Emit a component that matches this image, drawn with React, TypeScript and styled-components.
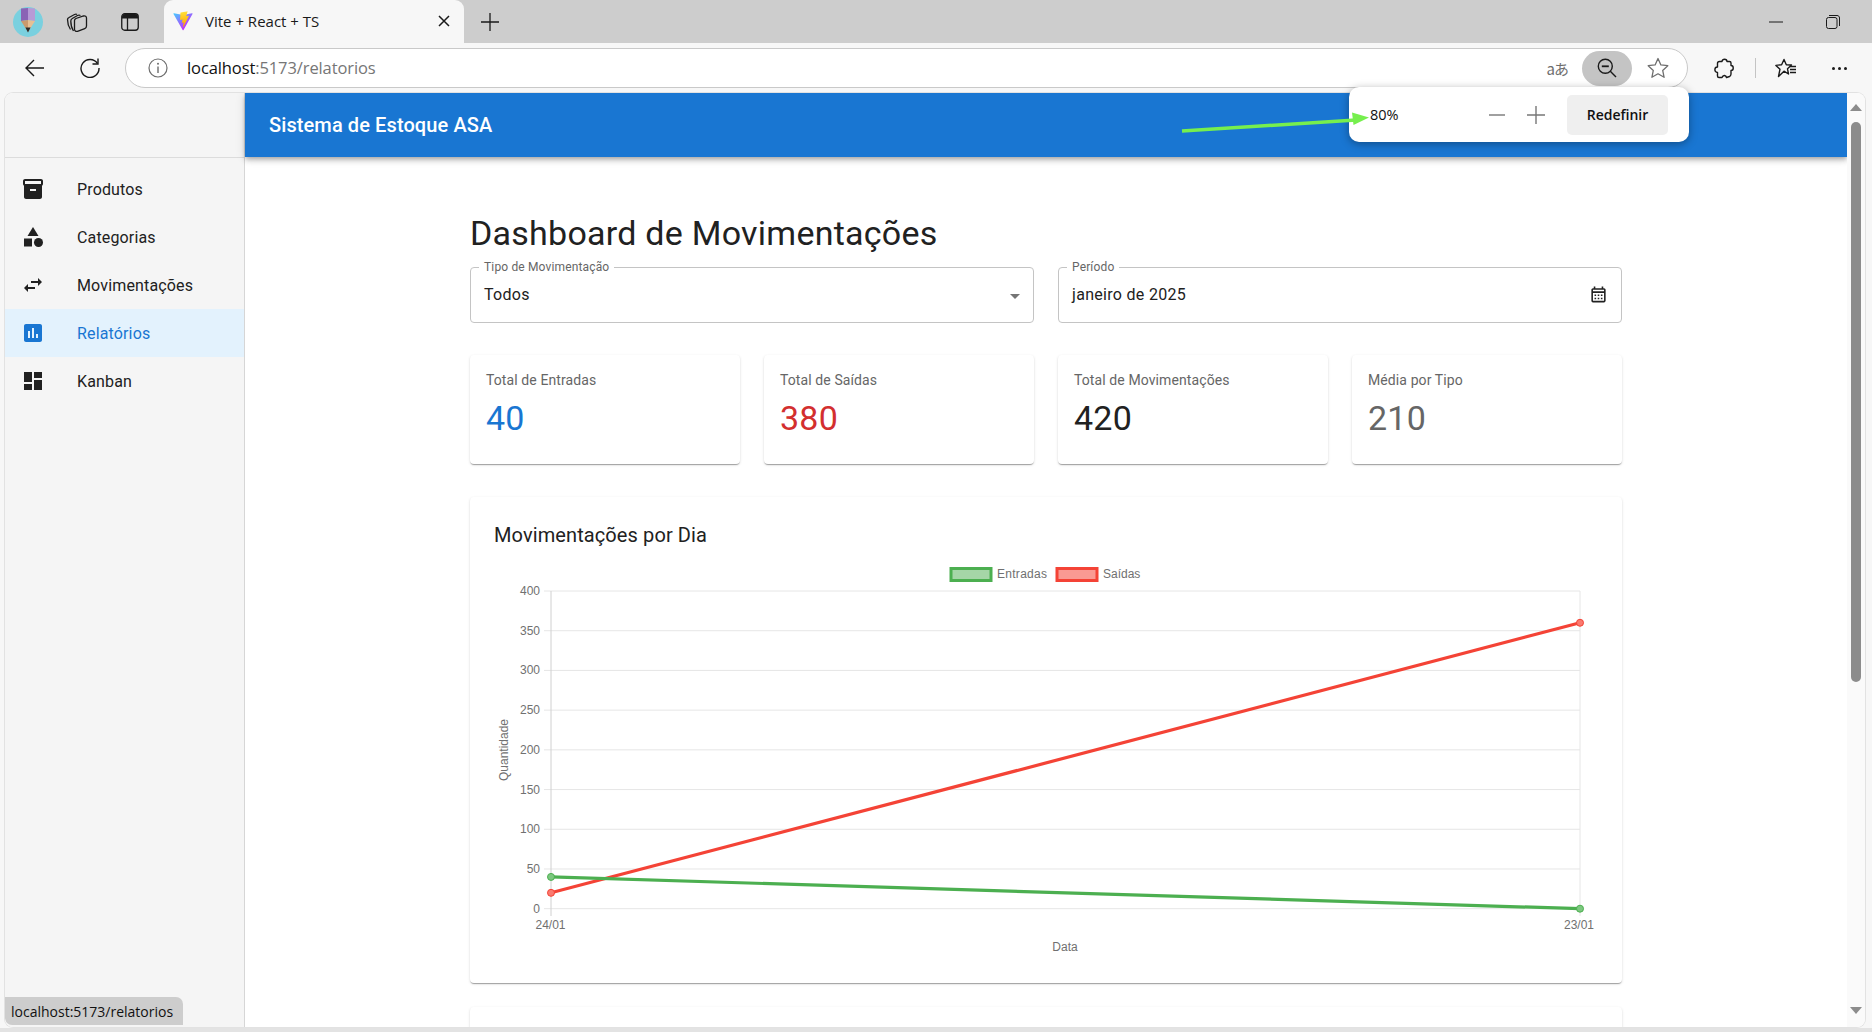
import React from 'react'
import styled, { createGlobalStyle } from 'styled-components'
import {
  MdInventory2,
  MdCategory,
  MdSwapHoriz,
  MdAssessment,
  MdDashboard,
  MdArrowDropDown,
  MdOutlineCalendarMonth,
} from 'react-icons/md'

const GlobalStyle = createGlobalStyle`
  html, body {
    margin: 0;
    padding: 0;
    height: 100%;
    overflow: hidden;
    background: #f7f7f7;
    font-family: Roboto, "Liberation Sans", sans-serif;
  }
  * { box-sizing: border-box; }
`

const chromeFont = `"Open Sans", "Noto Sans", "Liberation Sans", sans-serif`

const menu = [
  { label: 'Produtos', icon: <MdInventory2 size={24} /> },
  { label: 'Categorias', icon: <MdCategory size={24} /> },
  { label: 'Movimentações', icon: <MdSwapHoriz size={24} /> },
  { label: 'Relatórios', icon: <MdAssessment size={24} />, active: true },
  { label: 'Kanban', icon: <MdDashboard size={24} /> },
]

const stats = [
  { label: 'Total de Entradas', value: '40', color: '#1976d2' },
  { label: 'Total de Saídas', value: '380', color: '#d32f2f' },
  { label: 'Total de Movimentações', value: '420', color: '#212121' },
  { label: 'Média por Tipo', value: '210', color: '#666666' },
]

const ticks = [400, 350, 300, 250, 200, 150, 100, 50, 0]
const plot = { left: 551, right: 1580, top: 590, bottom: 907.7 }
const yOf = (v: number) => plot.bottom - (v / 400) * (plot.bottom - plot.top)

const ViteLogo = () => (
  <svg width="20" height="20" viewBox="0 0 410 404">
    <defs>
      <linearGradient id="va" x1="6" y1="33" x2="235" y2="344" gradientUnits="userSpaceOnUse">
        <stop stopColor="#41D1FF" />
        <stop offset="1" stopColor="#BD34FE" />
      </linearGradient>
      <linearGradient id="vb" x1="194" y1="8" x2="236" y2="292" gradientUnits="userSpaceOnUse">
        <stop stopColor="#FFEA83" />
        <stop offset="0.08" stopColor="#FFDD35" />
        <stop offset="1" stopColor="#FFA800" />
      </linearGradient>
    </defs>
    <path
      d="M399.641 59.5246L215.643 388.545C211.844 395.338 202.084 395.378 198.228 388.618L10.5817 59.5563C6.38087 52.1896 12.6802 43.2665 21.0281 44.7586L205.223 77.6824C206.398 77.8924 207.601 77.8904 208.776 77.6763L389.119 44.8058C397.439 43.2894 403.768 52.1434 399.641 59.5246Z"
      fill="url(#va)"
    />
    <path
      d="M292.965 1.5744L156.801 28.2552C154.563 28.6937 152.906 30.5903 152.771 32.8664L144.395 174.33C144.198 177.662 147.258 180.248 150.51 179.498L188.42 170.749C191.967 169.931 195.172 173.055 194.443 176.622L183.18 231.775C182.422 235.487 185.907 238.661 189.532 237.56L212.947 230.446C216.577 229.344 220.065 232.527 219.297 236.242L201.398 322.875C200.278 328.294 207.486 331.249 210.492 326.603L212.5 323.5L323.454 102.072C325.312 98.3645 322.108 94.137 318.036 94.9228L279.014 102.454C275.347 103.161 272.227 99.746 273.262 96.1583L298.731 7.86689C299.767 4.27314 296.636 0.855181 292.965 1.5744Z"
      fill="url(#vb)"
    />
  </svg>
)

const Avatar = () => (
  <svg width="30" height="30" viewBox="0 0 30 30">
    <circle cx="15" cy="15" r="15" fill="#7ad0df" />
    <path d="M8 1.5 L15 1 L15 13 L8 14 Z" fill="#8a63b5" />
    <path d="M15 1 L22 1.5 L22 14 L15 13 Z" fill="#b79ad6" />
    <path d="M8 14 L15 13 L15 25 Z" fill="#c99a6e" />
    <path d="M22 14 L15 13 L15 25 Z" fill="#e6bf94" />
    <path d="M12.4 20.5 L17.6 20.5 L15 25.5 Z" fill="#2c2c2c" />
  </svg>
)

const CollectionsIcon = () => (
  <svg width="22" height="22" viewBox="0 0 22 22" fill="none" stroke="#1a1a1a" strokeWidth="1.3">
    <path d="M4.5 18.5 C2.5 15.5 1.5 12 1.5 8.5 C1.5 7.5 2 7 3 6.5 L8.5 3.5 C9.5 3 10.5 3 11 3.5" />
    <path d="M7.5 20 C5.5 17 4.8 13.5 4.8 10 C4.8 8.8 5.3 8 6.3 7.5 L11.5 4.5 C12.5 4 13.5 4 14.5 4.5" />
    <path d="M8.5 9.5 C8.5 8.5 9 8 10 7.5 L17.5 5 C19.2 4.6 20.5 5.6 20.5 7 L20.5 15 C20.5 16.3 19.8 17.2 18.7 17.6 L11.5 20.3 C9.8 20.8 8.5 19.8 8.5 18.3 Z" />
  </svg>
)

const VerticalTabsIcon = () => (
  <svg width="18" height="18" viewBox="0 0 18 18" fill="none">
    <rect x="0.75" y="0.75" width="16.5" height="16.5" rx="3" stroke="#1a1a1a" strokeWidth="1.3" />
    <path d="M1 4 a3 3 0 0 1 3 -3 h10 a3 3 0 0 1 3 3 v1.5 H1 Z" fill="#1a1a1a" />
    <path d="M6.5 5 V17" stroke="#1a1a1a" strokeWidth="1.3" />
  </svg>
)

const BackIcon = () => (
  <svg width="20" height="20" viewBox="0 0 20 20" fill="none" stroke="#1a1a1a" strokeWidth="1.4">
    <path d="M1 10 H19 M9 2 L1 10 L9 18" />
  </svg>
)

const RefreshIcon = () => (
  <svg width="20" height="20" viewBox="0 0 20 20" fill="none" stroke="#1a1a1a" strokeWidth="1.4">
    <path d="M17.5 5.5 A9 9 0 1 0 19 10" />
    <path d="M18 0.5 V6 H12.5" />
  </svg>
)

const InfoIcon = () => (
  <svg width="20" height="20" viewBox="0 0 20 20" fill="none">
    <circle cx="10" cy="10" r="9" stroke="#6e6e6e" strokeWidth="1.2" />
    <path d="M10 8.5 V15" stroke="#6e6e6e" strokeWidth="1.4" />
    <circle cx="10" cy="5.8" r="1" fill="#6e6e6e" />
  </svg>
)

const ZoomOutIcon = () => (
  <svg width="20" height="20" viewBox="0 0 20 20" fill="none" stroke="#1a1a1a" strokeWidth="1.4">
    <circle cx="8.3" cy="8.3" r="7" />
    <path d="M13.3 13.3 L19 19" />
    <path d="M4.8 8.3 H11.8" strokeWidth="1.8" />
  </svg>
)

const StarIcon = () => (
  <svg width="22" height="22" viewBox="0 0 22 22" fill="none" stroke="#6f6f6f" strokeWidth="1.3">
    <path d="M11 1.5 L13.9 7.9 L20.8 8.7 L15.7 13.4 L17.1 20.3 L11 16.8 L4.9 20.3 L6.3 13.4 L1.2 8.7 L8.1 7.9 Z" strokeLinejoin="round" />
  </svg>
)

const PuzzleIcon = () => (
  <svg width="20" height="21" viewBox="0 0 20 21" fill="none" stroke="#1a1a1a" strokeWidth="1.4" strokeLinejoin="round">
    <path d="M5.5 3.5 H8 C8 0.5 13 0.5 13 3.5 H15.5 C16.5 3.5 17 4 17 5 V7.5 C20 7.5 20 12.5 17 12.5 V16 C17 17 16.5 18 15.5 18.5 L12.5 19.5 C12 17 9 16.5 8 19.5 H5 C4 19.5 3.5 19 3.5 18 V14.5 C0 14.5 0 9 3.5 9 V5.5 C3.5 4.5 4.5 3.5 5.5 3.5 Z" />
  </svg>
)

const FavoritesIcon = () => (
  <svg width="22" height="20" viewBox="0 0 22 20" fill="none" stroke="#1a1a1a" strokeWidth="1.4" strokeLinejoin="round">
    <path d="M9 1.5 L11.3 6.7 L16.5 7 L12.5 10.8 L13.5 16 L9 13.2 L3.5 18.5 L5 11.2 L0.9 7.4 L6.6 6.7 Z" />
    <path d="M15 8.5 H21 M15 11.5 H21 M15 14.5 H21" />
  </svg>
)

const DemoArrow = () => (
  <ArrowSvg width="200" height="24" viewBox="0 0 200 24">
    <path d="M2 20 L176 9" stroke="#76ef4e" strokeWidth="3.4" />
    <path d="M189 6.5 L172 1.5 L173.5 14 Z" fill="#76ef4e" />
  </ArrowSvg>
)

const LineChart = () => (
  <ChartSvg width="1104" height="403" viewBox="494 556 1104 403">
    {ticks.map((t) => (
      <g key={t}>
        <line x1={544} x2={plot.right} y1={yOf(t)} y2={yOf(t)} stroke="#e6e6e6" strokeWidth="1" />
        <ChartText x={540} y={yOf(t) + 4} textAnchor="end">
          {t}
        </ChartText>
      </g>
    ))}
    <line x1={plot.left} x2={plot.left} y1={plot.top} y2={915} stroke="#d0d0d0" />
    <line x1={plot.right} x2={plot.right} y1={plot.top} y2={915} stroke="#e6e6e6" />

    <rect x="951" y="567.5" width="40" height="12" fill="#a5d6a7" stroke="#4caf50" strokeWidth="3" />
    <ChartText x={997} y={577} textLength={50}>Entradas</ChartText>
    <rect x="1057" y="567.5" width="40" height="12" fill="#fa9a93" stroke="#f44336" strokeWidth="3" />
    <ChartText x={1103} y={577}>Saídas</ChartText>

    <line x1={plot.left} y1={yOf(20)} x2={plot.right} y2={yOf(360)} stroke="#f44336" strokeWidth="3.2" />
    <circle cx={plot.left} cy={yOf(20)} r="3.5" fill="#fa7a70" stroke="#f44336" />
    <circle cx={plot.right} cy={yOf(360)} r="3.5" fill="#fa7a70" stroke="#f44336" />
    <line x1={plot.left} y1={yOf(40)} x2={plot.right} y2={yOf(0)} stroke="#4caf50" strokeWidth="3.2" />
    <circle cx={plot.left} cy={yOf(40)} r="3.5" fill="#7cc87f" stroke="#4caf50" />
    <circle cx={plot.right} cy={yOf(0)} r="3.5" fill="#7cc87f" stroke="#4caf50" />

    <ChartText x={550.5} y={928} textAnchor="middle">24/01</ChartText>
    <ChartText x={1579} y={928} textAnchor="middle">23/01</ChartText>
    <ChartText x={1065} y={950} textAnchor="middle">Data</ChartText>
    <ChartText x={0} y={0} textAnchor="middle" transform="translate(508 749) rotate(-90)">
      Quantidade
    </ChartText>
  </ChartSvg>
)

export default function App() {
  return (
    <Window>
      <GlobalStyle />
      <TabStrip>
        <AvatarSlot>
          <Avatar />
        </AvatarSlot>
        <StripButton>
          <CollectionsIcon />
        </StripButton>
        <StripButton>
          <VerticalTabsIcon />
        </StripButton>
        <Tab>
          <ViteLogo />
          <TabTitle>Vite + React + TS</TabTitle>
          <TabClose>
            <svg width="12" height="12" viewBox="0 0 12 12" stroke="#1a1a1a" strokeWidth="1.5">
              <path d="M1 1 L11 11 M11 1 L1 11" />
            </svg>
          </TabClose>
        </Tab>
        <NewTab>
          <svg width="18" height="18" viewBox="0 0 18 18" stroke="#1a1a1a" strokeWidth="1.3">
            <path d="M9 0 V18 M0 9 H18" />
          </svg>
        </NewTab>
        <WindowControls>
          <WindowButton>
            <svg width="14" height="2" viewBox="0 0 14 2" stroke="#1a1a1a">
              <path d="M0 1 H14" />
            </svg>
          </WindowButton>
          <WindowButton>
            <svg width="14" height="14" viewBox="0 0 14 14" fill="none" stroke="#1a1a1a">
              <rect x="0.5" y="2.5" width="10.5" height="11" rx="2" />
              <path d="M3 0.5 H11 C12.5 0.5 13.5 1.5 13.5 3 V11" />
            </svg>
          </WindowButton>
        </WindowControls>
      </TabStrip>

      <Toolbar>
        <ToolButton>
          <BackIcon />
        </ToolButton>
        <ToolButton>
          <RefreshIcon />
        </ToolButton>
        <AddressBar>
          <InfoSlot>
            <InfoIcon />
          </InfoSlot>
          <Url>
            localhost<UrlRest>:5173/relatorios</UrlRest>
          </Url>
          <TranslateGlyph>aあ</TranslateGlyph>
          <ZoomPill>
            <ZoomOutIcon />
          </ZoomPill>
          <StarSlot>
            <StarIcon />
          </StarSlot>
        </AddressBar>
        <ExtensionSlot>
          <PuzzleIcon />
        </ExtensionSlot>
        <ToolDivider />
        <FavoritesSlot>
          <FavoritesIcon />
        </FavoritesSlot>
        <MoreDots>
          <Dot />
          <Dot />
          <Dot />
        </MoreDots>
      </Toolbar>

      <ZoomPopup>
        <ZoomValue>80%</ZoomValue>
        <ZoomStep>
          <svg width="16" height="2" viewBox="0 0 16 2" stroke="#777">
            <path d="M0 1 H16" strokeWidth="1.4" />
          </svg>
        </ZoomStep>
        <ZoomStep>
          <svg width="18" height="18" viewBox="0 0 18 18" stroke="#777" strokeWidth="1.4">
            <path d="M9 0 V18 M0 9 H18" />
          </svg>
        </ZoomStep>
        <ResetButton>Redefinir</ResetButton>
      </ZoomPopup>
      <DemoArrow />

      <Viewport>
        <Sidebar>
          <SidebarHead />
          <SideList>
            {menu.map((item) => (
              <SideItem key={item.label} $active={item.active}>
                <SideIcon>{item.icon}</SideIcon>
                {item.label}
              </SideItem>
            ))}
          </SideList>
          <StatusBubble>localhost:5173/relatorios</StatusBubble>
        </Sidebar>

        <MainColumn>
          <AppBar>Sistema de Estoque ASA</AppBar>
          <Content>
            <Title>Dashboard de Movimentações</Title>
            <Filters>
              <Field>
                <FieldLabel>Tipo de Movimentação</FieldLabel>
                Todos
                <SelectArrow>
                  <MdArrowDropDown size={24} />
                </SelectArrow>
              </Field>
              <Field>
                <FieldLabel>Período</FieldLabel>
                janeiro de 2025
                <CalendarSlot>
                  <MdOutlineCalendarMonth size={19} />
                </CalendarSlot>
              </Field>
            </Filters>

            <StatGrid>
              {stats.map((s) => (
                <StatCard key={s.label}>
                  <StatLabel>{s.label}</StatLabel>
                  <StatValue $color={s.color}>{s.value}</StatValue>
                </StatCard>
              ))}
            </StatGrid>

            <ChartCard>
              <ChartTitle>Movimentações por Dia</ChartTitle>
              <LineChart />
            </ChartCard>
            <NextCard />
          </Content>
        </MainColumn>

        <Scrollbar>
          <ScrollArrowUp />
          <ScrollThumb />
          <ScrollArrowDown />
        </Scrollbar>
      </Viewport>
      <BottomEdge />
    </Window>
  )
}

const Window = styled.div`
  position: relative;
  width: 1872px;
  height: 1032px;
  display: flex;
  flex-direction: column;
  background: #f7f7f7;
  overflow: hidden;
`

const TabStrip = styled.div`
  height: 43px;
  flex: none;
  display: flex;
  align-items: center;
  background: #cdcdcd;
  font-family: ${chromeFont};
`

const AvatarSlot = styled.div`
  width: 30px;
  height: 30px;
  margin: 0 19px 0 13px;
  display: flex;
`

const StripButton = styled.div`
  width: 30px;
  height: 30px;
  margin-right: 23px;
  display: flex;
  align-items: center;
  justify-content: center;
`

const Tab = styled.div`
  width: 300px;
  height: 43px;
  margin-left: -4px;
  padding: 0 14px 2px 9px;
  display: flex;
  align-items: center;
  background: #f7f7f7;
  border-radius: 9px 9px 0 0;
  color: #1a1a1a;
  font-size: 15px;
`

const TabTitle = styled.span`
  margin-left: 12px;
  flex: 1;
`

const TabClose = styled.span`
  display: flex;
  margin-right: 0;
`

const NewTab = styled.div`
  margin-left: 17px;
  display: flex;
`

const WindowControls = styled.div`
  margin-left: auto;
  margin-right: 32px;
  display: flex;
  gap: 43px;
  align-items: center;
`

const WindowButton = styled.div`
  display: flex;
`

const Toolbar = styled.div`
  height: 50px;
  flex: none;
  display: flex;
  align-items: center;
  background: #f7f7f7;
  padding-left: 25px;
  font-family: ${chromeFont};
`

const ToolButton = styled.div`
  width: 20px;
  height: 20px;
  margin-right: 35px;
  display: flex;
`

const AddressBar = styled.div`
  width: 1563px;
  height: 40px;
  margin-left: -10px;
  display: flex;
  align-items: center;
  background: #ffffff;
  border: 1px solid #c9c9c9;
  border-radius: 20px;
`

const InfoSlot = styled.div`
  margin-left: 22px;
  display: flex;
`

const Url = styled.div`
  margin-left: 19px;
  padding-bottom: 2px;
  flex: 1;
  color: #111111;
  font-size: 16.5px;
  letter-spacing: -0.1px;
`

const UrlRest = styled.span`
  color: #767676;
`

const TranslateGlyph = styled.span`
  margin-right: 14px;
  color: #6e6e6e;
  font-size: 15px;
  font-family: "Noto Sans CJK JP", "Noto Sans", sans-serif;
  letter-spacing: -1px;
`

const ZoomPill = styled.div`
  width: 50px;
  height: 35px;
  display: flex;
  align-items: center;
  justify-content: center;
  background: #c4c4c4;
  border-radius: 18px;
`

const StarSlot = styled.div`
  margin: 0 18px 0 15px;
  display: flex;
`

const ExtensionSlot = styled.div`
  margin-left: 26px;
  display: flex;
`

const ToolDivider = styled.div`
  width: 1px;
  height: 20px;
  margin: 0 19px 0 21px;
  background: #c4c4c4;
`

const FavoritesSlot = styled.div`
  display: flex;
`

const MoreDots = styled.div`
  margin-left: 35px;
  display: flex;
  gap: 3px;
`

const Dot = styled.span`
  width: 3px;
  height: 3px;
  border-radius: 50%;
  background: #1a1a1a;
`

const ZoomPopup = styled.div`
  position: absolute;
  z-index: 5;
  left: 1349px;
  top: 87px;
  width: 340px;
  height: 55px;
  display: flex;
  align-items: center;
  background: #ffffff;
  border-radius: 10px;
  box-shadow: 0 2px 8px rgba(0, 0, 0, 0.35);
  font-family: ${chromeFont};
  color: #111111;
`

const ZoomValue = styled.span`
  margin-left: 21px;
  width: 107px;
  font-size: 14.5px;
`

const ZoomStep = styled.span`
  width: 40px;
  display: flex;
  justify-content: center;
  margin-right: -1px;
`

const ResetButton = styled.div`
  width: 101px;
  height: 40px;
  margin-left: 12px;
  display: flex;
  align-items: center;
  justify-content: center;
  background: #efefef;
  border-radius: 5px;
  font-size: 14px;
  font-weight: 600;
`

const ArrowSvg = styled.svg`
  position: absolute;
  z-index: 6;
  left: 1180px;
  top: 111px;
`

const Viewport = styled.div`
  height: 934px;
  flex: none;
  margin: 0 7px 0 5px;
  display: flex;
  overflow: hidden;
  background: #ffffff;
  border-radius: 8px 8px 8px 8px;
  box-shadow: 0 0 0 1px #e2e2e2;
`

const Sidebar = styled.aside`
  position: relative;
  width: 240px;
  flex: none;
  background: #f5f5f5;
  border-right: 1px solid #d6d6d6;
`

const SidebarHead = styled.div`
  height: 65px;
  border-bottom: 1px solid #dcdcdc;
`

const SideList = styled.nav`
  padding-top: 7px;
`

const SideItem = styled.div<{ $active?: boolean }>`
  height: 48px;
  padding-left: 16px;
  display: flex;
  align-items: center;
  font-size: 16px;
  letter-spacing: 0.15px;
  color: ${(p) => (p.$active ? '#1976d2' : '#212121')};
  background: ${(p) => (p.$active ? '#e3f2fd' : 'transparent')};
`

const SideIcon = styled.span`
  width: 56px;
  display: flex;
`

const StatusBubble = styled.div`
  position: absolute;
  left: 0;
  bottom: 2px;
  width: 178px;
  height: 28px;
  padding-left: 6px;
  display: flex;
  align-items: center;
  background: #cdcdcd;
  border-radius: 0 7px 0 7px;
  color: #111111;
  font-family: ${chromeFont};
  font-size: 14px;
  white-space: nowrap;
`

const MainColumn = styled.div`
  flex: 1;
  min-width: 0;
  display: flex;
  flex-direction: column;
`

const AppBar = styled.header`
  height: 64px;
  flex: none;
  padding-left: 24px;
  display: flex;
  align-items: center;
  position: relative;
  background: #1976d2;
  color: #ffffff;
  font-size: 20px;
  font-weight: 500;
  letter-spacing: 0.1px;
  box-shadow: 0 2px 4px -1px rgba(0, 0, 0, 0.2), 0 4px 5px rgba(0, 0, 0, 0.14), 0 1px 10px rgba(0, 0, 0, 0.12);
`

const Content = styled.main`
  width: 1152px;
  margin: 0 auto;
  padding-top: 55px;
`

const Title = styled.h1`
  margin: 0 0 13px;
  font-size: 34px;
  font-weight: 400;
  line-height: 42px;
  letter-spacing: 0.25px;
  color: #212121;
`

const Filters = styled.div`
  display: grid;
  grid-template-columns: 1fr 1fr;
  gap: 24px;
  margin-bottom: 32px;
`

const Field = styled.div`
  position: relative;
  height: 56px;
  padding: 0 0 2px 13px;
  display: flex;
  align-items: center;
  border: 1px solid #c4c4c4;
  border-radius: 4px;
  font-size: 16px;
  letter-spacing: 0.3px;
  color: #212121;
`

const FieldLabel = styled.span`
  position: absolute;
  left: 8px;
  top: -8px;
  padding: 0 5px;
  background: #ffffff;
  font-size: 12px;
  line-height: 14px;
  letter-spacing: 0.15px;
  color: #666666;
`

const SelectArrow = styled.span`
  position: absolute;
  right: 6px;
  top: 16px;
  display: flex;
  color: #757575;
`

const CalendarSlot = styled.span`
  position: absolute;
  right: 13px;
  top: 17px;
  display: flex;
  color: #212121;
`

const StatGrid = styled.div`
  display: grid;
  grid-template-columns: repeat(4, 1fr);
  gap: 24px;
  margin-bottom: 33px;
`

const paperShadow = `0 2px 1px -1px rgba(0,0,0,.2), 0 1px 1px rgba(0,0,0,.14), 0 1px 3px rgba(0,0,0,.12)`

const StatCard = styled.div`
  height: 109px;
  padding: 15px 16px 16px;
  background: #ffffff;
  border-radius: 4px;
  box-shadow: ${paperShadow};
`

const StatLabel = styled.div`
  margin-bottom: 7px;
  font-size: 14px;
  line-height: 20px;
  letter-spacing: 0.1px;
  color: #666666;
`

const StatValue = styled.div<{ $color: string }>`
  font-size: 34px;
  line-height: 42px;
  letter-spacing: 0.25px;
  color: ${(p) => p.$color};
`

const ChartCard = styled.section`
  height: 486px;
  padding: 22px 24px 24px;
  background: #ffffff;
  border-radius: 4px;
  box-shadow: ${paperShadow};
`

const ChartTitle = styled.h2`
  margin: 0 0 6px;
  font-size: 20px;
  font-weight: 400;
  line-height: 32px;
  letter-spacing: 0.1px;
  color: #212121;
`

const ChartSvg = styled.svg`
  display: block;
`

const ChartText = styled.text`
  font-family: "Liberation Sans", Arial, sans-serif;
  font-size: 12px;
  fill: #707070;
`

const NextCard = styled.section`
  height: 200px;
  margin-top: 24px;
  background: #ffffff;
  border-radius: 4px;
  box-shadow: ${paperShadow};
`

const Scrollbar = styled.div`
  width: 18px;
  flex: none;
  position: relative;
  padding-top: 29px;
  display: flex;
  justify-content: center;
  background: #fafafa;
`

const ScrollThumb = styled.div`
  width: 10px;
  height: 560px;
  background: #8c8c8c;
  border-radius: 5px;
`

const ScrollArrowUp = styled.span`
  position: absolute;
  top: 11px;
  left: 3px;
  border-left: 6.5px solid transparent;
  border-right: 6.5px solid transparent;
  border-bottom: 7px solid #8c8c8c;
`

const ScrollArrowDown = styled.span`
  position: absolute;
  bottom: 13px;
  left: 3px;
  border-left: 6.5px solid transparent;
  border-right: 6.5px solid transparent;
  border-top: 7px solid #8c8c8c;
`

const BottomEdge = styled.div`
  height: 5px;
  flex: none;
  margin-top: 1px;
  background: #e3e3e3;
`
